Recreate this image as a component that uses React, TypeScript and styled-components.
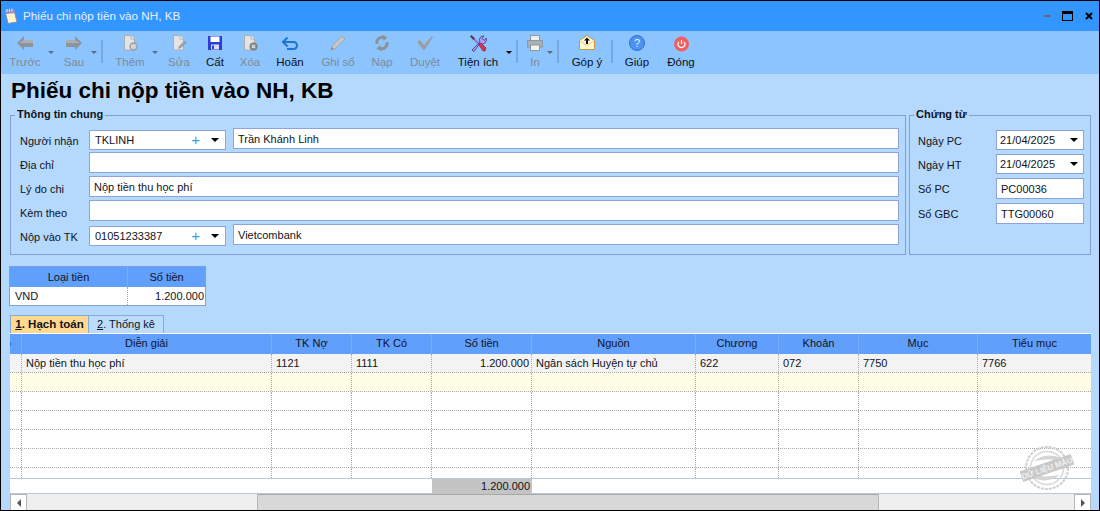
import React from "react";
import styled, { createGlobalStyle } from "styled-components";

const GlobalStyle = createGlobalStyle`
  html, body { margin: 0; padding: 0; }
  body { font-family: "Liberation Sans", Arial, sans-serif; font-size: 11px; color: #10131c; }
  * { box-sizing: border-box; }
`;

const Page = styled.div`
  position: relative;
  width: 1100px;
  height: 511px;
  display: flex;
  flex-direction: column;
  overflow: hidden;
  border: 1px solid #000;
  background: #b5d9fd;
`;

/* title bar */
const TitleBar = styled.div`
  height: 30px;
  flex: none;
  display: flex;
  align-items: center;
  padding: 0 6px 0 3px;
  background: #3395ff;
  color: #e6f1ff;
  font-size: 11.7px;
`;
const TitleText = styled.span`
  margin-left: 5px;
  padding-bottom: 2px;
  flex: 1;
`;
const WinControls = styled.div`
  display: flex;
  align-items: center;
`;
const MinBtn = styled.span`
  width: 7px;
  height: 2px;
  background: #5c6b7c;
  margin-right: 11px;
`;
const MaxBtn = styled.span`
  width: 11px;
  height: 10px;
  border: 1px solid #000;
  border-top-width: 3px;
  margin-right: 12px;
`;

/* toolbar */
const Toolbar = styled.div`
  height: 43px;
  flex: none;
  display: flex;
  padding-left: 2px;
  background: #8cc4ff;
`;
const ToolBtn = styled.div<{ $w: number; $pl?: number; $pr?: number; $off?: boolean }>`
  position: relative;
  flex: none;
  width: ${(p) => p.$w + (p.$pl || 0) + (p.$pr || 0)}px;
  padding: 3px ${(p) => p.$pr || 0}px 0 ${(p) => p.$pl || 0}px;
  display: flex;
  flex-direction: column;
  align-items: center;
  color: ${(p) => (p.$off ? "#7f8a96" : "#0c1020")};
  svg { display: block; }
`;
const ToolLabel = styled.span`
  margin-top: 3px;
  line-height: 14px;
  font-size: 11.5px;
  white-space: nowrap;
`;
const Caret = styled.span<{ $r: number; $off?: boolean }>`
  position: absolute;
  top: 20px;
  right: ${(p) => p.$r}px;
  width: 0;
  height: 0;
  border-left: 3px solid transparent;
  border-right: 3px solid transparent;
  border-top: 3px solid ${(p) => (p.$off ? "#5d6c7c" : "#000")};
`;
const ToolSep = styled.span`
  flex: none;
  width: 2px;
  height: 23px;
  margin-top: 9px;
  background: #78a8dc;
`;

/* body */
const Body = styled.div`
  flex: 1;
  min-height: 0;
  display: flex;
  flex-direction: column;
  padding: 0 7px 0 9px;
`;
const Heading = styled.h1`
  margin: 3px 0 0 1px;
  font-size: 22.5px;
  line-height: 27px;
  font-weight: 700;
  color: #000;
  white-space: nowrap;
`;
const Groups = styled.div`
  display: flex;
  margin-top: 4px;
  height: 147px;
`;
const Group = styled.fieldset<{ $w: number; $ml?: number }>`
  width: ${(p) => p.$w}px;
  margin: 0 0 0 ${(p) => p.$ml || 0}px;
  padding: 0 6px 0 8px;
  border: 1px solid #7f9fd8;
  min-inline-size: 0;
  height: 147px;
`;
const Legend = styled.legend`
  margin-left: -4px;
  padding: 0 2px;
  font-weight: 700;
  line-height: 12px;
  height: 14px;
  color: #10131c;
`;
const InfoRows = styled.div`
  display: grid;
  grid-template-columns: 70px 137px 1fr;
  grid-auto-rows: 21px;
  row-gap: 3px;
  margin-top: 6px;
`;
const FieldLabel = styled.label`
  line-height: 14px;
  align-self: end;
  padding-left: 1px;
  padding-bottom: 1px;
`;
const Input = styled.div<{ $span?: number; $ml?: number }>`
  grid-column: span ${(p) => p.$span || 1};
  margin-left: ${(p) => p.$ml || 0}px;
  height: 21px;
  padding: 0 0 0 4px;
  line-height: 20px;
  background: #fff;
  border: 1px solid #8ea3de;
  white-space: nowrap;
  overflow: hidden;
`;
const Combo = styled.div`
  height: 20px;
  margin-top: 2px;
  display: flex;
  align-items: center;
  padding: 0 6px 0 5px;
  background: #fff;
  border: 1px solid #8ea3de;
`;
const ComboText = styled.span`
  flex: 1;
`;
const Plus = styled.span`
  color: #3d9be8;
  font-size: 15px;
  line-height: 14px;
  margin-right: 11px;
`;
const ComboArrow = styled.span`
  width: 0;
  height: 0;
  border-left: 4px solid transparent;
  border-right: 4px solid transparent;
  border-top: 4px solid #000;
`;
const DocRows = styled.div`
  display: grid;
  grid-template-columns: 78px 88px;
  grid-template-rows: 20px 20px 21px 21px;
  row-gap: 4px;
  margin-top: 8px;
`;
const DocCombo = styled(Combo)`
  margin-top: 0;
  padding: 0 5px 0 3px;
`;
const DocLabel = styled.label`
  line-height: 14px;
  padding-top: 4px;
`;
const DocInput = styled(Input)`
  padding-left: 4px;
`;

/* currency table */
const MoneyTable = styled.div`
  width: 197px;
  margin: 11px 0 0 -1px;
  border: 1px solid #7f9fd8;
  background: #fff;
`;
const MoneyRow = styled.div<{ $head?: boolean }>`
  display: grid;
  grid-template-columns: 118px 1fr;
  height: ${(p) => (p.$head ? 20 : 18)}px;
  line-height: ${(p) => (p.$head ? 20 : 18)}px;
  background: ${(p) => (p.$head ? "#609ffb" : "#fff")};
`;
const MoneyCell = styled.div<{ $head?: boolean; $right?: boolean }>`
  text-align: ${(p) => (p.$head ? "center" : p.$right ? "right" : "left")};
  padding: 0 ${(p) => (p.$right ? 1 : 0)}px 0 ${(p) => (!p.$head && !p.$right ? 5 : 0)}px;
  &:first-child {
    border-right: 1px ${(p) => (p.$head ? "solid #77aef7" : "dotted #aaa")};
  }
`;

/* tabs */
const Tabs = styled.div`
  display: flex;
  height: 18px;
  margin-top: 9px;
`;
const Tab = styled.div<{ $on?: boolean }>`
  height: 18px;
  width: ${(p) => (p.$on ? 79 : 75)}px;
  text-align: center;
  line-height: 17px;
  font-weight: ${(p) => (p.$on ? 700 : 400)};
  font-size: ${(p) => (p.$on ? 11.5 : 11)}px;
  background: ${(p) => (p.$on ? "#ffd98f" : "#bcdcfd")};
  border: 1px solid #86a9dc;
  border-bottom: 0;
  border-left-width: ${(p) => (p.$on ? 1 : 0)}px;
  u { text-underline-offset: 1px; }
`;

/* grid */
const COLS = "12px 250px 80px 80px 100px 164px 83px 80px 119px 1fr";
const Grid = styled.div`
  margin-right: 1px;
  display: flex;
  flex-direction: column;
  flex: 1;
  min-height: 0;
  background: #fff;
`;
const GridHead = styled.div`
  flex: none;
  display: grid;
  grid-template-columns: ${COLS};
  height: 20px;
  margin-top: 1px;
  line-height: 19px;
  background: #609ffb;
`;
const HeadCell = styled.div`
  position: relative;
  text-align: center;
  border-right: 1px solid #77aef7;
  &:last-child { border-right: 0; }
`;
const RowMark = styled.span`
  position: absolute;
  left: 0;
  top: 8px;
  width: 1px;
  height: 4px;
  background: #2f6fe0;
`;
const GridRows = styled.div`
  flex: none;
  height: 125px;
  overflow: hidden;
  border-bottom: 1px solid #b9c8d3;
`;
const GridRow = styled.div<{ $bg: string }>`
  display: grid;
  grid-template-columns: ${COLS};
  height: 19px;
  line-height: 18px;
  background: ${(p) => p.$bg};
  border-bottom: 1px dotted #aaa;
`;
const Cell = styled.div<{ $right?: boolean }>`
  padding: 0 ${(p) => (p.$right ? 2 : 0)}px 0 ${(p) => (p.$right ? 0 : 4)}px;
  text-align: ${(p) => (p.$right ? "right" : "left")};
  border-right: 1px dotted #aaa;
  white-space: nowrap;
  overflow: hidden;
  &:last-child { border-right: 0; }
`;
const GridFoot = styled.div`
  flex: none;
  display: grid;
  grid-template-columns: ${COLS};
  height: 15px;
  line-height: 15px;
  border-bottom: 1px solid #b9c8d3;
`;
const FootCell = styled.div<{ $sum?: boolean }>`
  text-align: right;
  padding-right: 2px;
  background: ${(p) => (p.$sum ? "#c4c4c4" : "transparent")};
`;
const ScrollBar = styled.div`
  flex: none;
  height: 16px;
  display: flex;
  background: #efefef;
`;
const ScrollBtn = styled.div`
  flex: none;
  width: 17px;
  display: flex;
  align-items: center;
  justify-content: center;
  background: #fff;
  border: 1px solid #b5b5b5;
  border-bottom: 0;
`;
const ScrollTrack = styled.div`
  flex: 1;
  padding-left: 230px;
  padding-right: 195px;
`;
const ScrollThumb = styled.div`
  height: 100%;
  background: #d8d8d8;
  border-left: 1px solid #b5b5b5;
  border-right: 1px solid #b5b5b5;
  border-top: 1px solid #a8a8a8;
`;
const ArrowL = styled.span`
  width: 0;
  height: 0;
  border-top: 4px solid transparent;
  border-bottom: 4px solid transparent;
  border-right: 4px solid #555;
`;
const ArrowR = styled.span`
  width: 0;
  height: 0;
  border-top: 4px solid transparent;
  border-bottom: 4px solid transparent;
  border-left: 4px solid #555;
`;
const Stamp = styled.svg`
  position: absolute;
  left: 1016px;
  top: 441px;
`;

const Ico = ({ children }: { children: React.ReactNode }) => (
  <svg width="18" height="18" viewBox="0 0 18 18">
    {children}
  </svg>
);

const DocShape = () => (
  <>
    <path d="M3.5 1.5h6.5l3.5 3.5v11h-10z" fill="#e4e4e4" stroke="#a8adb3" />
    <path d="M10 1.5v3.5h3.5" fill="#fff" stroke="#a8adb3" />
  </>
);

const icons = {
  prev: (
    <Ico>
      <path d="M1 9l7-7v4h9v7h-9v3z" fill="#8d949b" />
      <path d="M8 6h9v3H3z" fill="#a9afb5" />
    </Ico>
  ),
  next: (
    <Ico>
      <path d="M17 9l-7-7v4H1v7h9v3z" fill="#8d949b" />
      <path d="M10 6H1v3h14z" fill="#a9afb5" />
    </Ico>
  ),
  add: (
    <Ico>
      <DocShape />
      <circle cx="12.5" cy="12.5" r="3.5" fill="#d0d4d8" stroke="#9aa0a6" strokeWidth="1.4" />
    </Ico>
  ),
  edit: (
    <Ico>
      <DocShape />
      <path d="M8 15l1-3 6-5.5 2 2-6 5.5z" fill="#9aa0a6" />
    </Ico>
  ),
  save: (
    <Ico>
      <rect x="2" y="2" width="14" height="14" fill="#2b3fd6" />
      <rect x="4.5" y="2.5" width="9" height="5.5" fill="#fff" />
      <rect x="5" y="10.5" width="8" height="5" fill="#d8def0" />
      <rect x="6" y="11.5" width="2" height="3.5" fill="#2b3fd6" />
    </Ico>
  ),
  del: (
    <Ico>
      <DocShape />
      <circle cx="12.5" cy="12.5" r="4" fill="#7d8287" />
      <path d="M10.8 10.8l3.4 3.4M14.2 10.8l-3.4 3.4" stroke="#e8e8e8" strokeWidth="1.2" />
    </Ico>
  ),
  undo: (
    <Ico>
      <path d="M3 8h9.5a3.2 3.2 0 0 1 0 7H6" fill="none" stroke="#1f74d0" strokeWidth="2" />
      <path d="M6.5 3.5L2 8l4.5 4.5" fill="none" stroke="#1f74d0" strokeWidth="2" />
    </Ico>
  ),
  post: (
    <Ico>
      <path d="M2 16l1-4L13 2l3 3L6 15z" fill="#c3c6c9" stroke="#a4a8ac" />
      <path d="M2 16l1-3 2 2z" fill="#85898d" />
    </Ico>
  ),
  reload: (
    <Ico>
      <path d="M4 10a5.5 5.5 0 0 1 7-6.5M14 8a5.5 5.5 0 0 1-7 6.5" fill="none" stroke="#8f9397" strokeWidth="3" />
      <path d="M9.5 0.5l5 3-4 3.5zM8.5 17.5l-5-3 4-3.5z" fill="#8f9397" />
    </Ico>
  ),
  check: (
    <Ico>
      <path d="M1 8l3-2 4 5 8-9 1 1-8.500 13h-1z" fill="#9a9da1" />
    </Ico>
  ),
  tools: (
    <Ico>
      <path d="M3 3l11 11" stroke="#8c7bd6" strokeWidth="2.4" />
      <path d="M1 2.500L2.500 1 6 4.500 4.500 6z" fill="#444" />
      <path d="M10 11l2-2 5 5-1 3h-2z" fill="#d8344c" stroke="#7a1f3a" strokeWidth=".6" />
      <path d="M3 16l8-8a4 4 0 0 1 4-6l-2 2.500 2.500 2L17 4a4 4 0 0 1-6 5l-6 8.500z" fill="#b59ff0" stroke="#4d3c8e" strokeWidth=".9" />
    </Ico>
  ),
  print: (
    <Ico>
      <rect x="4.500" y="1.500" width="9" height="5" fill="#eceef0" stroke="#8f969c" />
      <rect x="1.500" y="6.500" width="15" height="6.500" fill="#a9b0b6" stroke="#8f969c" />
      <rect x="4.500" y="11" width="9" height="5.500" fill="#f2f3f4" stroke="#8f969c" />
    </Ico>
  ),
  feedback: (
    <Ico>
      <path d="M1.500 6.500L9 1.500l7.500 5v9h-15z" fill="#fff6cf" stroke="#c49a3a" />
      <path d="M1.500 6.500L9 11.500l7.500-5" fill="none" stroke="#e8cf88" />
      <path d="M9 3.500l3 3h-2v3.500H8V6.500H6z" fill="#111" />
    </Ico>
  ),
  help: (
    <Ico>
      <circle cx="9" cy="9" r="7.500" fill="#4f92ee" stroke="#2f6fd0" />
      <text x="9" y="13" textAnchor="middle" fontSize="11" fontFamily="Liberation Sans" fill="#e8f2ff">
        ?
      </text>
    </Ico>
  ),
  close: (
    <Ico>
      <circle cx="9.500" cy="10" r="7.500" fill="#f06060" />
      <path d="M7 7.800a3.400 3.400 0 1 0 5 0" fill="none" stroke="#fff" strokeWidth="1.200" />
      <path d="M9.500 6v4" stroke="#fff" strokeWidth="1.200" />
    </Ico>
  ),
};

type ToolDef =
  | { sep: true }
  | {
      sep?: false;
      icon: keyof typeof icons;
      label: string;
      w: number;
      pl?: number;
      pr?: number;
      off?: boolean;
      caret?: number;
    };

const tools: ToolDef[] = [
  { icon: "prev", label: "Trước", w: 44, pr: 7, off: true, caret: 0 },
  { icon: "next", label: "Sau", w: 40, pr: 7, off: true, caret: 4 },
  { sep: true },
  { icon: "add", label: "Thêm", w: 54, off: true, caret: -1 },
  { icon: "edit", label: "Sửa", w: 44, off: true },
  { icon: "save", label: "Cất", w: 28 },
  { icon: "del", label: "Xóa", w: 42, off: true },
  { icon: "undo", label: "Hoãn", w: 38 },
  { icon: "post", label: "Ghi sổ", w: 58, off: true },
  { icon: "reload", label: "Nạp", w: 30, off: true },
  { icon: "check", label: "Duyệt", w: 56, off: true },
  { icon: "tools", label: "Tiện ích", w: 50, pr: 13, caret: 4 },
  { sep: true },
  { icon: "print", label: "In", w: 34, pr: 5, off: true, caret: 4 },
  { sep: true },
  { icon: "feedback", label: "Góp ý", w: 48, pl: 4 },
  { sep: true },
  { icon: "help", label: "Giúp", w: 48 },
  { icon: "close", label: "Đóng", w: 40 },
];

const headers = ["Diễn giải", "TK Nợ", "TK Có", "Số tiền", "Nguồn", "Chương", "Khoản", "Mục", "Tiểu mục"];
const firstRow = ["Nộp tiền thu học phí", "1121", "1111", "1.200.000", "Ngân sách Huyện tự chủ", "622", "072", "7750", "7766"];

const infoRows = [
  { label: "Địa chỉ", value: "" },
  { label: "Lý do chi", value: "Nộp tiền thu học phí" },
  { label: "Kèm theo", value: "" },
];

export default function App() {
  return (
    <Page>
      <GlobalStyle />
      <TitleBar>
        <svg width="14" height="16" viewBox="0 0 14 16">
          <path d="M1 3l9-1 3 12-9 1.500z" fill="#fff7c8" stroke="#8f86b8" />
          <path d="M1 3l9-1 .8 3-9 1z" fill="#8f86d8" />
          <path d="M3 1v3M5.500 .8v3M8 .6v3" stroke="#f2f2f2" />
        </svg>
        <TitleText>Phiếu chi nộp tiền vào NH, KB</TitleText>
        <WinControls>
          <MinBtn />
          <MaxBtn />
          <svg width="8" height="8" viewBox="0 0 8 8">
            <path d="M1 1l6 6M7 1L1 7" stroke="#000" strokeWidth="2" />
          </svg>
        </WinControls>
      </TitleBar>

      <Toolbar>
        {tools.map((t, i) =>
          t.sep ? (
            <ToolSep key={i} />
          ) : (
            <ToolBtn key={t.label} $w={t.w} $pl={t.pl} $pr={t.pr} $off={t.off}>
              {icons[t.icon]}
              <ToolLabel>{t.label}</ToolLabel>
              {t.caret !== undefined && <Caret $r={t.caret} $off={t.off} />}
            </ToolBtn>
          )
        )}
      </Toolbar>

      <Body>
        <Heading>Phiếu chi nộp tiền vào NH, KB</Heading>
        <Groups>
          <Group $w={896}>
            <Legend>Thông tin chung</Legend>
            <InfoRows>
              <FieldLabel>Người nhận</FieldLabel>
              <Combo>
                <ComboText>TKLINH</ComboText>
                <Plus>+</Plus>
                <ComboArrow />
              </Combo>
              <Input $ml={7}>Trần Khánh Linh</Input>
              {infoRows.map((r) => (
                <React.Fragment key={r.label}>
                  <FieldLabel>{r.label}</FieldLabel>
                  <Input $span={2}>{r.value}</Input>
                </React.Fragment>
              ))}
              <FieldLabel>Nộp vào TK</FieldLabel>
              <Combo>
                <ComboText>01051233387</ComboText>
                <Plus>+</Plus>
                <ComboArrow />
              </Combo>
              <Input $ml={7}>Vietcombank</Input>
            </InfoRows>
          </Group>
          <Group $w={182} $ml={3}>
            <Legend>Chứng từ</Legend>
            <DocRows>
              <DocLabel>Ngày PC</DocLabel>
              <DocCombo>
                <ComboText>21/04/2025</ComboText>
                <ComboArrow />
              </DocCombo>
              <DocLabel>Ngày HT</DocLabel>
              <DocCombo>
                <ComboText>21/04/2025</ComboText>
                <ComboArrow />
              </DocCombo>
              <DocLabel>Số PC</DocLabel>
              <DocInput>PC00036</DocInput>
              <DocLabel>Số GBC</DocLabel>
              <DocInput>TTG00060</DocInput>
            </DocRows>
          </Group>
        </Groups>

        <MoneyTable>
          <MoneyRow $head>
            <MoneyCell $head>Loại tiền</MoneyCell>
            <MoneyCell $head>Số tiền</MoneyCell>
          </MoneyRow>
          <MoneyRow>
            <MoneyCell>VND</MoneyCell>
            <MoneyCell $right>1.200.000</MoneyCell>
          </MoneyRow>
        </MoneyTable>

        <Tabs>
          <Tab $on>
            <u>1</u>. Hạch toán
          </Tab>
          <Tab>
            <u>2</u>. Thống kê
          </Tab>
        </Tabs>

        <Grid>
          <GridHead>
            <HeadCell>
              <RowMark />
            </HeadCell>
            {headers.map((h) => (
              <HeadCell key={h}>{h}</HeadCell>
            ))}
          </GridHead>
          <GridRows>
            {[0, 1, 2, 3, 4, 5, 6].map((r) => (
              <GridRow key={r} $bg={r === 0 ? "#f3f3f3" : r === 1 ? "#fffde6" : "#fff"}>
                <Cell />
                {firstRow.map((v, i) => (
                  <Cell key={i} $right={i === 3}>
                    {r === 0 ? v : ""}
                  </Cell>
                ))}
              </GridRow>
            ))}
          </GridRows>
          <GridFoot>
            <FootCell />
            <FootCell />
            <FootCell />
            <FootCell />
            <FootCell $sum>1.200.000</FootCell>
          </GridFoot>
          <ScrollBar>
            <ScrollBtn>
              <ArrowL />
            </ScrollBtn>
            <ScrollTrack>
              <ScrollThumb />
            </ScrollTrack>
            <ScrollBtn>
              <ArrowR />
            </ScrollBtn>
          </ScrollBar>
        </Grid>
      </Body>

      <Stamp width="62" height="52" viewBox="0 0 62 52">
        <circle cx="30" cy="26" r="21" fill="none" stroke="#cfcfcf" strokeWidth="2" strokeDasharray="3 1" />
        <circle cx="30" cy="26" r="16.500" fill="none" stroke="#d8d8d8" strokeWidth="1.500" />
        <path d="M17 19c8-6 18-7 26-3l-6 2c-7-1-13 0-20 1zM43 33c-8 6-18 7-26 3l6-2c7 1 13 0 20-1z" fill="#d4d4d4" />
        <g transform="rotate(-19 30 26)">
          <rect x="3" y="20.500" width="54" height="11" fill="#c8c8c8" />
          <text x="30" y="29" textAnchor="middle" fontSize="8" fontWeight="700" fontFamily="Liberation Sans" fill="#f0f0f0">
            DỮ LIỆU MẪU
          </text>
        </g>
      </Stamp>
    </Page>
  );
}
